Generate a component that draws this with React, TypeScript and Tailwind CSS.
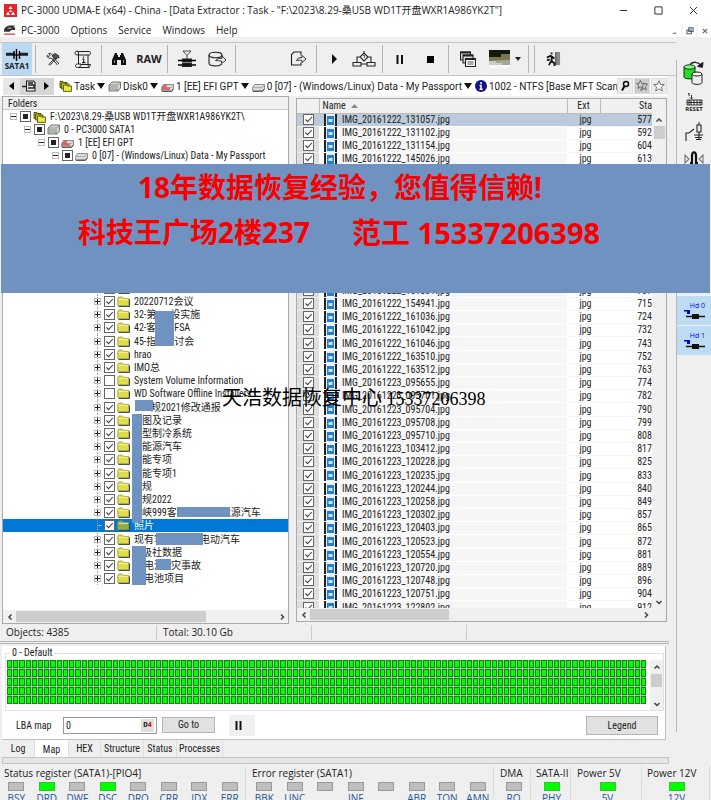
import React from "react";

const UI = "font-['Open_Sans','Noto_Sans_CJK_SC',sans-serif]";
const NARROW = "font-['Liberation_Sans_Narrow','Roboto_Condensed',Roboto,'Noto_Sans_CJK_SC',sans-serif]";

type Mark = "partial" | "on" | "off";
type Node = { level: keyof typeof INDENT; mark: Mark; icon: "stack" | "disk" | "red" | "drive" | "folder"; label: (string | number)[]; open?: boolean; selected?: boolean };

const INDENT = { 0: "pl-[6px]", 1: "pl-[20px]", 2: "pl-[34px]", 3: "pl-[48px]", 6: "pl-[90px]" };

const ROOTS: Node[] = [
  { level: 0, mark: "partial", icon: "stack", label: ["F:\\2023\\8.29-桑USB WD1T开盘WXR1A986YK2T\\"], open: true },
  { level: 1, mark: "partial", icon: "disk", label: ["0 - PC3000 SATA1"], open: true },
  { level: 2, mark: "partial", icon: "red", label: ["1 [EE] EFI GPT"], open: true },
  { level: 3, mark: "partial", icon: "drive", label: ["0 [07] - (Windows/Linux) Data - My Passport"], open: true },
];

const folder = (mark: Mark, ...label: (string | number)[]): Node => ({ level: 6, mark, icon: "folder", label });

// A number in a label stands for a blank of that many pixels under a masked area.
const FOLDERS: Node[] = [
  folder("on", "信息建设计划通知文件"),
  folder("on", "20220712会议"),
  folder("on", "32-第", 14, "设实施"),
  folder("on", "42-客", 18, "FSA"),
  folder("on", "45-指", 18, "讨会"),
  folder("on", "hrao"),
  folder("on", "IMO总"),
  folder("off", "System Volume Information"),
  folder("off", "WD Software Offline Installers"),
  folder("on", 17, "规2021修改通报"),
  folder("on", 8, "图及记录"),
  folder("on", 8, "型制冷系统"),
  folder("on", 8, "能源汽车"),
  folder("on", 8, "能专项"),
  folder("on", 8, "能专项1"),
  folder("on", 8, "规"),
  folder("on", 8, "规2022"),
  folder("on", 8, "峡999客", 44, "能源汽车"),
  { ...folder("on", "照片"), selected: true },
  folder("on", "现有客", 36, "电动汽车"),
  folder("on", 8, "级社数据"),
  folder("on", 10, "电池", 7, "灾事故"),
  folder("on", 10, "电池项目"),
];

const FILES_TOP = [["20161222_131057", "577"], ["20161222_131102", "592"], ["20161222_131154", "604"], ["20161222_145026", "613"]];
const FILES = [
  ["20161222_151831", "707"], ["20161222_154941", "715"], ["20161222_161036", "724"], ["20161222_161042", "732"], ["20161222_161046", "743"],
  ["20161222_163510", "752"], ["20161222_163512", "763"], ["20161223_095655", "774"], ["20161223_095701", "782"], ["20161223_095704", "790"],
  ["20161223_095708", "799"], ["20161223_095710", "808"], ["20161223_103412", "817"], ["20161223_120228", "825"], ["20161223_120235", "833"],
  ["20161223_120244", "840"], ["20161223_120258", "849"], ["20161223_120302", "857"], ["20161223_120403", "865"], ["20161223_120523", "872"],
  ["20161223_120554", "881"], ["20161223_120720", "889"], ["20161223_120748", "896"], ["20161223_120751", "904"], ["20161223_122802", "912"],
];

function Check({ mark, name, id }: { mark: Mark; name?: string; id?: string }) {
  return (
    <span className="grid size-[11px] shrink-0">
      <input id={id} aria-label={name} type="checkbox" defaultChecked={mark !== "off"} className="[grid-area:1/1] size-[11px] appearance-none border border-[#666] bg-white" />
      <svg viewBox="0 0 11 11" className="pointer-events-none [grid-area:1/1] size-[11px]">
        {mark === "on" && <path d="M2.5 5.5 4.6 7.6 8.8 3" fill="none" stroke="#444" strokeWidth="1.1" />}
        {mark === "partial" && <rect x="3" y="3" width="5" height="5" fill="#222" />}
      </svg>
    </span>
  );
}

function Drive({ red, tall }: { red?: boolean; tall?: boolean }) {
  return (
    <svg viewBox="0 0 13 11" className="h-[11px] w-[13px] shrink-0">
      {tall ? (
        <>
          <path d="M1 4 4 1h8.5v6L10 10H1z" fill="#d3d9d3" stroke="#555" strokeWidth=".8" />
          <path d="M1 4h9l2.5-3M1 6h9M1 8h9" fill="none" stroke="#777" strokeWidth=".7" />
          <path d="M8 9h1.5" stroke="#2a2" />
        </>
      ) : (
        <>
          <path d="M.6 6.500 2.500 3.500h10V7.500L10.500 10H.6z" fill="#dcdcdc" stroke="#777" strokeWidth=".8" />
          <path d="M.6 6.500h9.800l2.100-3" fill="none" stroke="#999" strokeWidth=".7" />
          {red && <path d="M1 6.200 3 3.500h3.500l-1 3h3.500v2.500H1z" fill="#d65a5a" opacity=".85" />}
          <path d="M1 10.300h9.600l2-2.600" fill="none" stroke="#222" strokeWidth=".8" />
        </>
      )}
    </svg>
  );
}

function Stack() {
  return (
    <svg viewBox="0 0 13 12" className="h-[12px] w-[13px] shrink-0" stroke="#3b3b00" strokeWidth=".8">
      <path d="M1 1.5h3l1 1h3v5H1z" fill="#b5b51a" />
      <path d="M2.6 3h3l1 1h3.4v5H2.6z" fill="#d2d225" />
      <path d="M4.4 5h3l1 1h4v5.4h-8z" fill="#eaea4a" />
    </svg>
  );
}

function Folder({ dim }: { dim?: boolean }) {
  return (
    <svg viewBox="0 0 13 11" className="h-[11px] w-[13px] shrink-0">
      <path d="M1.5 10.4h11V3.4" fill="none" stroke="#333" strokeWidth="1" />
      <path d="M.8 9.6V2.2L2 1h3.3l1.200 1.400h5.200v7.200z" fill={dim ? "#8fae4a" : "#dedd4a"} stroke="#9a9a3a" strokeWidth=".8" />
      <path d="M1.6 3.400h9.400" stroke="#f8f8a8" strokeWidth=".8" />
    </svg>
  );
}

function TreeRow({ node, id }: { node: Node; id: string }) {
  return (
    <li className={`flex h-[13px] items-center nth-[5n]:h-[14px] ${INDENT[node.level]} ${node.selected ? "bg-[#0078d7] text-white" : ""}`}>
      <span className="relative mr-[2px] flex w-[9px] shrink-0 items-center justify-center self-stretch">
        {node.level === 6 && <span className="absolute inset-y-0 left-[4px] border-l border-dotted border-[#aaa]" />}
        {node.selected ? (
          <span className="ml-[4px] h-px w-full bg-[#7fb8ea]" />
        ) : (
          <button aria-label={node.open ? "Collapse" : "Expand"} className="relative flex size-[7px] items-center justify-center border border-[#bbb] bg-white">
            <svg viewBox="0 0 5 5" className="size-[5px] shrink-0"><path d={node.open ? "M0 2.5h5" : "M0 2.5h5M2.5 0v5"} stroke="#222" /></svg>
          </button>
        )}
      </span>
      <Check mark={node.mark} id={id} />
      <span className="mr-[4px] ml-[2px] flex">
        {node.icon === "stack" ? <Stack /> : node.icon === "folder" ? <Folder dim={node.selected} /> : <Drive tall={node.icon === "disk"} red={node.icon === "red"} />}
      </span>
      <label htmlFor={id} className="flex whitespace-pre">
        {node.label.map((p, i) => (typeof p === "number" ? <span key={i} style={{ width: p }} /> : <span key={i}>{p}</span>))}
      </label>
    </li>
  );
}

function Mask({ className }: { className: string }) {
  return <div className={`absolute bg-[#6f92c0] ${className}`} />;
}

function Chevron({ dir }: { dir: "up" | "down" | "left" | "right" }) {
  const d = { up: "M1.5 5.5 4 3l2.5 2.5", down: "M1.5 3 4 5.5 6.5 3", left: "M5.5 1.5 3 4l2.5 2.5", right: "M3 1.5 5.5 4 3 6.5" }[dir];
  return (
    <button aria-label={`Scroll ${dir}`} className="flex size-[13px] shrink-0 items-center justify-center">
      <svg viewBox="0 0 8 8" className="size-[8px]"><path d={d} fill="none" stroke="#444" strokeWidth="1.5" /></svg>
    </button>
  );
}

function FileRow({ file, size, first }: { file: string; size: string; first?: boolean }) {
  return (
    <tr className={`h-[13px] nth-[5n]:h-[14px] ${first ? "bg-[#bccbdb]" : ""}`}>
      <td className={`border-b border-[#eee] p-0 ${first ? "" : "bg-[#dedede]"}`}><span className="flex justify-center"><Check mark="on" name={`IMG_${file}`} /></span></td>
      <td className="p-0">
        <svg viewBox="0 0 13 12" className="ml-[5px] block h-[12px] w-[13px]">
          <rect width="13" height="12" fill="#222" /><rect x="2" width="9" height="12" fill="#e8eef4" />
          <rect x="3" y="2" width="7" height="9" fill="#1d7fd6" /><path d="M4.500 8V5h4v3z" fill="#cbe7ff" />
        </svg>
      </td>
      <td className={`overflow-hidden border-b border-white/60 p-0 pl-[3px] leading-[11px] ${first ? "" : "bg-[#f6f6f6]"}`}>IMG_{file}.jpg</td>
      <td className="border-b border-[#f4f4f4] p-0 pl-[4px] text-center leading-[11px]">jpg</td>
      <td className="overflow-hidden border-b border-[#f4f4f4] p-0 text-right leading-[11px]">{size}</td>
    </tr>
  );
}

function FileTable() {
  return (
    <table className="w-full table-fixed border-collapse">
      <colgroup><col className="w-[22px]" /><col className="w-[20px]" /><col /><col className="w-[33px]" /><col className="w-[52px]" /></colgroup>
      <thead>
        <tr className="h-[14px] bg-[#f0f0f0] text-left">
          <th className="border-r border-b border-[#bbb] p-0" />
          <th colSpan={2} className="border-r border-b border-[#bbb] p-0 font-normal">
            <span className="flex items-center gap-[5px] pl-[3px] leading-[12px]">Name <svg viewBox="0 0 7 4" className="h-[4px] w-[7px]"><path d="M0 4 3.5 0 7 4z" fill="#888" /></svg></span>
          </th>
          <th className="border-r border-b border-[#bbb] p-0 text-center leading-[12px] font-normal">Ext</th>
          <th className="border-b border-[#bbb] p-0 text-right leading-[12px] font-normal">Sta</th>
        </tr>
      </thead>
      <tbody>
        {FILES_TOP.map(([f, s], i) => <FileRow key={f} file={f} size={s} first={i === 0} />)}
        <tr className="h-[119px]"><td colSpan={5} className="p-0" /></tr>
        {FILES.map(([f, s]) => <FileRow key={f} file={f} size={s} />)}
      </tbody>
    </table>
  );
}

function Tool({ name, children, className = "w-[30px]" }: { name: string; children: React.ReactNode; className?: string }) {
  return <button aria-label={name} className={`flex h-full shrink-0 items-center justify-center ${className}`}>{children}</button>;
}
const Sep = () => <span className="flex h-[28px] w-[6px] shrink-0 justify-center"><span className="w-px bg-[#b4b4b4]" /></span>;

function Ink({ children, className = "size-[20px]", box = "0 0 20 20" }: { children: React.ReactNode; className?: string; box?: string }) {
  return <svg viewBox={box} className={`shrink-0 ${className}`} fill="none" stroke="#222" strokeWidth="1.1">{children}</svg>;
}

function Toolbar() {
  return (
    <div role="toolbar" className="mr-[35px] flex h-[34px] items-center border-y border-[#c4c4c4] pl-[2px]">
      <button className="flex h-full w-[30px] flex-col items-center justify-center bg-[#b9d9f3] text-[8px] leading-[9px] font-bold">
        <Ink box="0 0 22 12" className="h-[12px] w-[22px]"><path d="M0 6h22M0 4.5h9M13 4.5h9" strokeWidth="1.3" /><path d="M8 2v8M10.5 0v12M13.5 2v8" stroke="#000" strokeWidth="1.4" /></Ink>
        SATA1
      </button>
      <Sep />
      <Tool name="Utilities">
        <Ink box="0 0 14 14" className="size-[14px]">
          <path d="M2.500 13 9 5.500M3.800 13.500l6.200-7" strokeWidth=".9" />
          <path d="M6.500 3.500 9 1.500l3.500 2 .5 2.500-1.500-.5-1.500 2z" fill="#555" strokeWidth=".8" />
          <path d="m11.500 13-6-7M13 12 6.500 4.500M5.500 6C3 7 1 5.500 1 3.500l2 1 1-1.300L2.800 1.500C5 1 7 2.500 6.500 4.500" strokeWidth=".9" />
        </Ink>
      </Tool>
      <Tool name="Script">
        <Ink box="0 0 18 19" className="h-[19px] w-[18px]">
          <path d="M4.500 14V3c0-2.500-3.500-2.500-3.500 0 0 1.500 1 2 3.500 2H15c2 0 2-3.500 0-3.500H3M14 5v10c0 2.500 2.500 2 2.500-.5H7" strokeWidth="1" />
          <path d="M15.500 17.500h-12c-3 0-2.500-3.500 0-3.500H7c0 2-1 3.500-3 3.500" strokeWidth="1" />
          <path d="M8.500 9h1.200v3.500M8 12.600h3.500M9.500 6.500v1.200" />
        </Ink>
      </Tool>
      <Sep />
      <Tool name="Search"><Ink className="h-[12px] w-[14px]" box="0 0 14 12"><path d="M3 0h2v2h1v2h2V2h1V0h2l3 7v5H9V7H5v5H0V7z" fill="#111" stroke="none" /><path d="M2.500 7v3M11.500 7v3" stroke="#aaa" strokeWidth=".8" /></Ink></Tool>
      <button className="h-full w-[30px] text-[11px] font-bold">RAW</button>
      <Sep />
      <span className="w-[2px]" />
      <Tool name="Filter">
        <Ink box="0 0 18 18" className="size-[18px]">
          <path d="M5 1h8L9 5.500zM9 5.500V9" strokeWidth=".8" />
          <path d="M0 10.500h18M0 15h18" strokeWidth="1.400" stroke="#000" /><path d="M4.500 9h9v3h-9zM4.500 13.500h9v3h-9z" fill="#111" />
        </Ink>
      </Tool>
      <Tool name="Export data">
        <Ink box="0 0 19 16" className="h-[16px] w-[19px]">
          <ellipse cx="7.500" cy="4" rx="6.500" ry="2.800" /><path d="M1 4v8c0 3.500 10 4 13 .8M14 4v2" />
          <path d="M7.500 9.500c2-2 4-2.500 6.500-2V5l4 4-4.500 3.500V10c-2-.3-4-.3-6-.5z" fill="#eee" strokeWidth=".9" />
        </Ink>
      </Tool>
      <Sep />
      <span className="w-[45px]" />
      <Tool name="Open task"><Ink box="0 0 17 16" className="h-[16px] w-[17px]"><path d="M11 4.500V1H4L1.500 3.500V14H11v-2.500" /><path d="M6.500 9.500C7.500 7.500 9 6.500 12 6.500V4.500L16 8l-4 3.500V9.500c-2-.5-3.500-.5-5.500 0z" fill="#eee" strokeWidth=".9" /></Ink></Tool>
      <Sep />
      <Tool name="Start"><Ink className="size-[10px]" box="0 0 10 10"><path d="M3 0v10l5-5z" fill="#111" stroke="none" /></Ink></Tool>
      <Tool name="Diagram"><Ink className="h-[17px] w-[24px]" box="0 0 24 17"><path d="M12 2 16 6l-4 4-4-4zM8 6H5v5M16 6h3v5M1 11.500h8V15H1zM15 11.500h8V15h-8zM9 13h6M12 0v2" /><path d="M11 5c.5-1.500 2.500-.5 1.500.5L12 7" strokeWidth=".8" /></Ink></Tool>
      <Sep />
      <Tool name="Pause"><Ink className="h-[9px] w-[8px]" box="0 0 8 9"><path d="M1.500 0v9M6 0v9" strokeWidth="2" stroke="#111" /></Ink></Tool>
      <Tool name="Stop"><span className="size-[7px] bg-black" /></Tool>
      <Sep />
      <Tool name="Windows" className="ml-[2px] w-[30px]"><Ink box="0 0 16 16" className="size-[16px]"><path d="M.5 1h10v8H.5z" fill="#ddd" /><path d="M3 4h10v8H3z" fill="#ddd" /><path d="M5.500 7.500h10v8h-10z" fill="#fff" /><path d="M.5 1.500h10M3 4.500h10M5.500 8h10" strokeWidth="1.800" /><path d="M7.500 11h6M7.500 13h6" strokeWidth=".8" /></Ink></Tool>
      <Tool name="Picture" className="ml-[4px] w-[24px]"><svg viewBox="0 0 21 18" className="h-[18px] w-[21px]"><rect width="21" height="18" fill="#ccc" /><rect width="21" height="7" fill="#15180f" /><path d="M0 7h12V4h9v6h-7v3H8v-2H0z" fill="#77784f" /><path d="M0 11h7v2h6v2h8v-5h-7" fill="#a3a69b" /><rect y="15" width="21" height="3" fill="#f8f8f8" /></svg></Tool>
      <Tool name="Picture options" className="w-[14px]"><svg viewBox="0 0 6 4" className="h-[4px] w-[6px]"><path d="M0 0h6L3 4z" fill="#222" /></svg></Tool>
      <Sep /><Sep />
      <Tool name="Exit" className="ml-[1px] w-[30px]"><Ink className="size-[15px]" box="0 0 16 16"><path d="M5 1.500h2M1 6l4-2 4 3M6 4v5M6 9l-3 5M5 9l4 3v3M1 9l3-1" strokeWidth="1.900" stroke="#111" /><rect x="11" width="4" height="14" fill="#888" stroke="none" /><path d="M10.500 0v14" /></Ink></Tool>
    </div>
  );
}

const Caret = () => <svg viewBox="0 0 8 6" className="ml-[2px] h-[6px] w-[8px] shrink-0"><path d="M0 0h8L4 6z" fill="#111" /></svg>;

function Crumb({ icon, children }: { icon: React.ReactNode; children: string }) {
  return <button className="mr-[3px] flex shrink-0 items-center whitespace-pre">{icon}<span className="ml-[2px]">{children}</span><Caret /></button>;
}

function Path() {
  const nav = "flex h-[17px] items-center justify-center";
  return (
    <nav className="mr-[44px] flex h-[20px] items-center bg-white pl-[3px] font-[Roboto,'Noto_Sans_CJK_SC',sans-serif]">
      <button aria-label="Back" className={`${nav} w-[17px] bg-[#e6e6e6]`}><svg viewBox="0 0 5 8" className="h-[8px] w-[5px]"><path d="M5 0v8L0 4z" /></svg></button>
      <button aria-label="Show path" className={`${nav} w-[18px] bg-[#d6d6d6]`}><Ink className="h-[12px] w-[14px]" box="0 0 14 12"><path d="M4.500 1h7l1.500 1.500V11H4.500z" fill="#eee" /><path d="M6 3h5M6 5h6v3H6M0 6.500h5" strokeWidth="1.400" /></Ink></button>
      <button aria-label="Forward" className={`${nav} mr-[5px] w-[16px] bg-[#d6d6d6]`}><svg viewBox="0 0 5 8" className="h-[8px] w-[5px]"><path d="M0 0v8l5-4z" /></svg></button>
      <Crumb icon={<Stack />}>Task</Crumb>
      <Crumb icon={<Drive tall />}>Disk0</Crumb>
      <Crumb icon={<Drive red />}>1 [EE] EFI GPT</Crumb>
      <Crumb icon={<Drive />}>0 [07] - (Windows/Linux) Data - My Passport</Crumb>
      <svg viewBox="0 0 12 12" className="size-[12px] shrink-0"><circle cx="6" cy="6" r="6" fill="#12128c" /><path d="M6 2v2M4.500 5.500H6V9M4.500 9.200h3.200" stroke="#fff" strokeWidth="1.500" fill="none" /></svg>
      <span className="ml-[2px] min-w-0 flex-1 overflow-hidden whitespace-pre">1002 - NTFS [Base MFT Scan</span>
      <div className="flex gap-[1px]">
        {["Find", "Bookmarks", "Add bookmark"].map((n, i) => (
          <button key={n} aria-label={n} className={`flex size-[16px] items-center justify-center border border-[#ddd] ${i === 1 ? "bg-[#ccc]" : "bg-[#ececec]"}`}>
            <svg viewBox="0 0 12 12" className="size-[12px]" fill="none">
              {i === 0 && <><circle cx="7" cy="4" r="2.500" stroke="#111" strokeWidth="1.500" /><path d="M5.500 6 3 10.500" stroke="#111" strokeWidth="2" /></>}
              {i === 1 && <path d="m4.500.5 1.200 2.800 3 .2-2.300 2 .7 3-2.600-1.600L2 8.500l.6-3L.5 3.500l2.800-.2zM8 3.500l3.500.5-2 2.500.7 3.500-3-1.500L5 11l.3-3" stroke="#555" strokeWidth=".8" />}
              {i === 2 && <path d="m6 .8 1.500 3.500 3.800.3-2.900 2.500.9 3.800L6 8.800l-3.300 2.100.9-3.800L.7 4.600l3.800-.3z" stroke="#555" fill="#fff" strokeWidth=".8" />}
            </svg>
          </button>
        ))}
      </div>
    </nav>
  );
}

function Rail() {
  return (
    <aside className="mt-[23px] mb-[32px] flex w-[35px] shrink-0 flex-col items-center border-l border-[#b8b8b8]">
      <button aria-label="Copy disk" className="mt-[1px] mb-[6px]">
        <svg viewBox="0 0 22 25" className="h-[25px] w-[22px]" stroke="#222">
          <path d="M7 3.500C10 .500 15 .500 18 4.500" fill="none" strokeWidth="1.500" /><path d="m14.500 5.500 5 .8.500-5z" fill="#111" />
          <path d="M1 6v10c0 2.500 11 2.500 11 0V6" fill="#1fe01f" /><ellipse cx="6.500" cy="6" rx="5.500" ry="2.200" fill="#7dff7d" />
          <path d="M9 13v8.500c0 2.500 10 2.500 10 0V13" fill="#eee" /><ellipse cx="14" cy="13" rx="5" ry="2" fill="#fff" />
        </svg>
      </button>
      <button className="mb-[9px] flex flex-col items-center text-[6px] leading-[7px] font-bold">
        <Ink box="0 0 17 14" className="h-[14px] w-[17px]"><path d="M3 1v3M5.500 3v4M4 5.500 5.500 7 7 5.500M2 1.500h1" strokeWidth=".9" /><path d="M1 8h15v5H1zM3 8v5M5 8v5M8 8v5M11 8v5M14 8v5M1 10.500h15" strokeWidth=".9" /></Ink>
        RESET
      </button>
      <button aria-label="Power control" className="mb-[9px]"><Ink box="0 0 18 20" className="h-[20px] w-[18px]"><path d="M1 19v-8h3l5-4M14 0v3M12 3h4v7h-4zM14 10v8M9 13h9M10 15.500h7M11 17.500h5" /></Ink></button>
      <button aria-label="Solenoid"><Ink box="0 0 20 18" className="h-[18px] w-[20px]"><path d="M1 4v8l4-4zM19 4v8l-4-4z" stroke="#777" /><path d="M6 12h2V5c0-5 4-5 4 0v7h2" strokeWidth="2.200" stroke="#111" /></Ink></button>
      <div className="mt-[127px] flex flex-col gap-[1px] self-stretch">
        {["Hd 0", "Hd 1"].map((h) => (
          <button key={h} className="flex h-[29px] flex-col items-center justify-center bg-[#bcdcf4] pl-[7px] text-[7px] leading-[8px] text-[#0000f0]">
            {h}
            <svg viewBox="0 0 22 10" className="mr-[6px] h-[10px] w-[22px]"><path d="M2 6.500h19" stroke="#111" strokeWidth="1.500" /><rect x="8" y="4" width="7" height="5" fill="#111" /><path d="M0 0h6v4H3V1.500H0z" fill="#0000e0" /></svg>
          </button>
        ))}
      </div>
    </aside>
  );
}

function MapPane() {
  return (
    <section className={`mt-[2px] mr-[10px] ml-[2px] border-r border-b border-[#c0c0c0] bg-white ${NARROW}`}>
      <fieldset className="mr-[1px] ml-[3px] min-w-0 border border-[#e2e2e2]">
        <legend className="ml-[4px] px-[2px] leading-[14px]">0 - Default</legend>
        <div className="flex justify-between">
          <div className="ml-[1px] grid h-[44px] min-w-0 flex-1 grid-cols-[repeat(103,minmax(0,1fr))] grid-rows-5 gap-px bg-[#a9c3a4]">
            {Array.from({ length: 515 }, (_, i) => <span key={i} className="border border-[#0a8a0a] bg-[#00ff00]" />)}
          </div>
          <div className="ml-[4px] flex h-[50px] w-[13px] flex-col items-center justify-between bg-[#f0f0f0]">
            <Chevron dir="up" /><span className="mb-[10px] h-[13px] w-[11px] bg-[#cdcdcd]" /><Chevron dir="down" />
          </div>
        </div>
      </fieldset>
      <div className="flex h-[28px] items-center pr-[7px] pl-[14px]">
        <label htmlFor="lba" className="w-[47px]">LBA map</label>
        <div className="mr-[5px] flex h-[17px] w-[94px] items-center border border-[#999] pr-[2px] pl-[2px]">
          <input id="lba" defaultValue="0" className="min-w-0 flex-1 outline-none" />
          <button className="h-[13px] w-[13px] bg-[#e0e0e0] text-[8px] leading-[12px] font-bold">D<span className="text-red-600">4</span></button>
        </div>
        <button className="h-[16px] w-[53px] border border-[#b5b5b5] bg-[#e1e1e1] leading-[14px]">Go to</button>
        <button aria-label="Pause map" className="ml-[14px] flex h-[21px] w-[26px] items-center bg-[#f0f0f0] pl-[6px]"><svg viewBox="0 0 7 9" className="h-[9px] w-[7px]"><path d="M1.500 0v9M5.500 0v9" stroke="#111" strokeWidth="2" /></svg></button>
        <button className="ml-auto h-[19px] w-[72px] border border-[#b5b5b5] bg-[#e1e1e1]">Legend</button>
      </div>
    </section>
  );
}

function Group({ title, leds, className }: { title: string; leds: [string, boolean?][]; className: string }) {
  return (
    <section className={`flex shrink-0 flex-col border-r border-[#ddd] ${className}`}>
      <h2 className="pl-[3px] leading-[15px] whitespace-pre">{title}</h2>
      <div className="flex justify-around">
        {leds.map(([l, on], i) => (
          <div key={i} className="flex w-[30px] flex-col items-center text-[#1d5594]">
            <span className={`mt-[1px] h-[9px] w-[16px] border ${on ? "border-[#2fc52f] bg-[#00ff00]" : "border-[#999] bg-[#bfbfbf]"}`} />
            <span className="leading-[15px]">{l}</span>
          </div>
        ))}
      </div>
    </section>
  );
}

export default function App() {
  return (
    <div className={`relative flex h-screen w-full flex-col overflow-hidden bg-[#efefef] text-[10px] text-[#222] ${UI}`}>
      <header className="shrink-0 bg-white">
        <div className="flex h-[20px] items-center pl-[4px]">
          <svg viewBox="0 0 13 13" className="size-[13px] shrink-0"><rect width="13" height="13" fill="#e3262b" /><path d="m6.500 2 2 3h-4zM2 11l2-3.500 2 3.500zM7 11l2-3.500 2 3.500zM5 8l1.500-2.500L8 8z" fill="#fff" /></svg>
          <h1 className="ml-[4px] flex-1 overflow-hidden whitespace-pre">PC-3000 UDMA-E (x64) - China - [Data Extractor : Task - "F:\2023\8.29-桑USB WD1T开盘WXR1A986YK2T"]</h1>
          <div className="flex">
            {[["Minimize", "M1 5h8"], ["Maximize", "M1 1h8v8H1z"], ["Close", "m1 1 8 8M9 1 1 9"]].map(([n, d]) => (
              <button key={n} aria-label={n} className="flex w-[35px] justify-center"><svg viewBox="0 0 10 10" className="size-[9px]"><path d={d} fill="none" stroke="#222" /></svg></button>
            ))}
          </div>
        </div>
        <div className="flex h-[17px] items-start pl-[4px]">
          <svg viewBox="0 0 13 12" className="mt-[4px] h-[12px] w-[12px] shrink-0"><path d="M0 7c0-4 3-6 8-6h4l-2 2h2v3H8L6 8H0z" fill="#333" /><path d="M4 4h4" stroke="#ccc" /><path d="M0 10.500h12" stroke="#d22" strokeWidth="1.200" /></svg>
          <nav className="ml-[5px] flex flex-1 gap-[11px]">
            {["PC-3000", "Options", "Service", "Windows", "Help"].map((m) => <button key={m} className="leading-[20px]">{m}</button>)}
          </nav>
          <div className="mt-[4px] flex gap-[2px] bg-[#f4f4f4]">
            {[["Minimize child", "M2 7h4"], ["Restore child", "M3 1h5v4H3zM1 3.500h5v4H1z"], ["Close child", "m2 2 5 5M7 2 2 7"]].map(([n, d]) => (
              <button key={n} aria-label={n} className="flex size-[13px] items-center justify-center bg-white"><svg viewBox="0 0 9 9" className="size-[8px]"><path d={d} fill="none" stroke="#556677" strokeWidth="1.200" /></svg></button>
            ))}
          </div>
        </div>
      </header>

      <div className="relative flex shrink-0">
        <main className="mt-[5px] -mr-[35px] min-w-0 flex-1">
          <Toolbar />
          <Path />
          <div className="mr-[35px] flex items-start">
            <section className={`relative ml-[2px] flex h-[528px] w-[287px] shrink-0 flex-col border border-[#aaa] bg-white ${NARROW}`}>
              <h2 className="h-[13px] shrink-0 border-b border-[#ccc] bg-[#f0f0f0] pl-[5px] leading-[13px]">Folders</h2>
              <ul className="min-h-0 flex-1 overflow-hidden leading-[13px]">
                {ROOTS.map((n, i) => <TreeRow key={i} id={`root${i}`} node={n} />)}
                <li className="h-[120px]" />
                {FOLDERS.map((n, i) => <TreeRow key={i} id={`folder${i}`} node={n} />)}
              </ul>
              <div className="flex h-[13px] shrink-0 items-center bg-[#f0f0f0]"><Chevron dir="left" /><span className="h-[11px] w-[190px] bg-[#cdcdcd]" /><span className="flex-1" /><Chevron dir="right" /></div>
              <Mask className="top-[214px] left-[152px] h-[35px] w-[19px]" />
              <Mask className="top-[303px] left-[132px] h-[11px] w-[18px]" />
              <Mask className="top-[317px] left-[129px] h-[109px] w-[10px]" />
              <Mask className="top-[410px] left-[174px] h-[10px] w-[53px]" />
              <Mask className="top-[436px] left-[153px] h-[12px] w-[47px]" />
              <Mask className="top-[449px] left-[129px] h-[39px] w-[14px]" />
              <Mask className="top-[462px] left-[153px] h-[11px] w-[15px]" />
            </section>
            <section className={`mt-[2px] mr-[9px] ml-[7px] flex h-[524px] min-w-0 flex-1 flex-col border border-[#aaa] bg-white ${NARROW}`}>
              <div className="flex min-h-0 flex-1">
                <div className="h-full min-w-0 flex-1 overflow-hidden"><FileTable /></div>
                <div className="flex w-[14px] flex-col items-center bg-[#f0f0f0] pt-[14px]"><Chevron dir="up" /><span className="h-[13px] w-[11px] bg-[#cdcdcd]" /><span className="flex-1" /><Chevron dir="down" /></div>
              </div>
              <div className="flex h-[13px] shrink-0 items-center bg-[#f0f0f0] pr-[14px]"><Chevron dir="left" /><span className="h-[11px] w-[139px] bg-[#cdcdcd]" /><span className="flex-1" /><Chevron dir="right" /></div>
            </section>
          </div>
          <div className="mr-[42px] ml-[2px] flex h-[17px] items-center">
            <span className="w-[155px] border-r border-[#ccc] pl-[4px] leading-[15px]">Objects: 4385</span>
            <span className="w-[155px] border-r border-[#ccc] pl-[6px] leading-[15px]">Total: 30.10 Gb</span>
            <span className="h-[15px] w-[155px] border-r border-[#ccc]" />
          </div>
          <div className="mr-[42px] h-[3px] border-y border-[#b4b4b4]" />
          <div className="mr-[35px]">
            <MapPane />
            <div role="tablist" className={`ml-[2px] flex h-[17px] ${NARROW}`}>
              {([["Log", "w-[33px]"], ["Map", "w-[34px] bg-white pt-[2px]"], ["HEX", "w-[32px]"], ["Structure", "w-[43px]"], ["Status", "w-[33px]"], ["Processes", "w-[46px]"]]).map(([t, w]) => (
                <button key={t} role="tab" aria-selected={t === "Map"} className={`border-r border-[#ddd] text-center leading-[15px] ${w}`}>{t}</button>
              ))}
            </div>
            <div className="mr-[7px] ml-[2px] h-[7px] border border-[#c4c4c4] bg-[#e6e6e6]" />
          </div>
        </main>
        <Rail />
      </div>

      <footer className="mt-[2px] flex">
        <Group className="w-[246px] pl-[1px]" title="Status register (SATA1)-[PIO4]" leds={[["BSY"], ["DRD", true], ["DWF"], ["DSC", true], ["DRQ"], ["CRR"], ["IDX"], ["ERR"]]} />
        <Group className="ml-[2px] w-[246px] pl-[1px]" title="Error register (SATA1)" leds={[["BBK"], ["UNC"], [""], ["INF"], [""], ["ABR"], ["TON"], ["AMN"]]} />
        <Group className="ml-[3px] w-[34px]" title="DMA" leds={[["RQ"]]} />
        <Group className="ml-[2px] w-[38px]" title="SATA-II" leds={[["PHY", true]]} />
        <Group className="ml-[3px] w-[68px]" title="Power 5V" leds={[["5V", true]]} />
        <Group className="ml-[2px] w-[66px]" title="Power 12V" leds={[["12V", true]]} />
      </footer>

      <div className="absolute inset-x-[1px] top-[164px] h-[129px] bg-[#6f92c0] font-['Noto_Sans','Noto_Sans_CJK_SC',sans-serif] text-[28px] font-bold text-[#f80000]">
        <p className="pt-[1px] pl-[137px] leading-[45px] whitespace-pre">18年数据恢复经验，您值得信赖!</p>
        <p className="flex gap-[42px] pl-[77px] leading-[45px] whitespace-pre"><span>科技王广场2楼237</span><span className="text-[29px]">范工 15337206398</span></p>
      </div>
      <p className="absolute top-[386px] left-[222px] font-['Liberation_Serif','Noto_Sans_CJK_SC',serif] text-[18px] leading-[24px] whitespace-pre text-black"><span className="text-[20px]">天浩数据恢复中心</span> 15337206398</p>
    </div>
  );
}
